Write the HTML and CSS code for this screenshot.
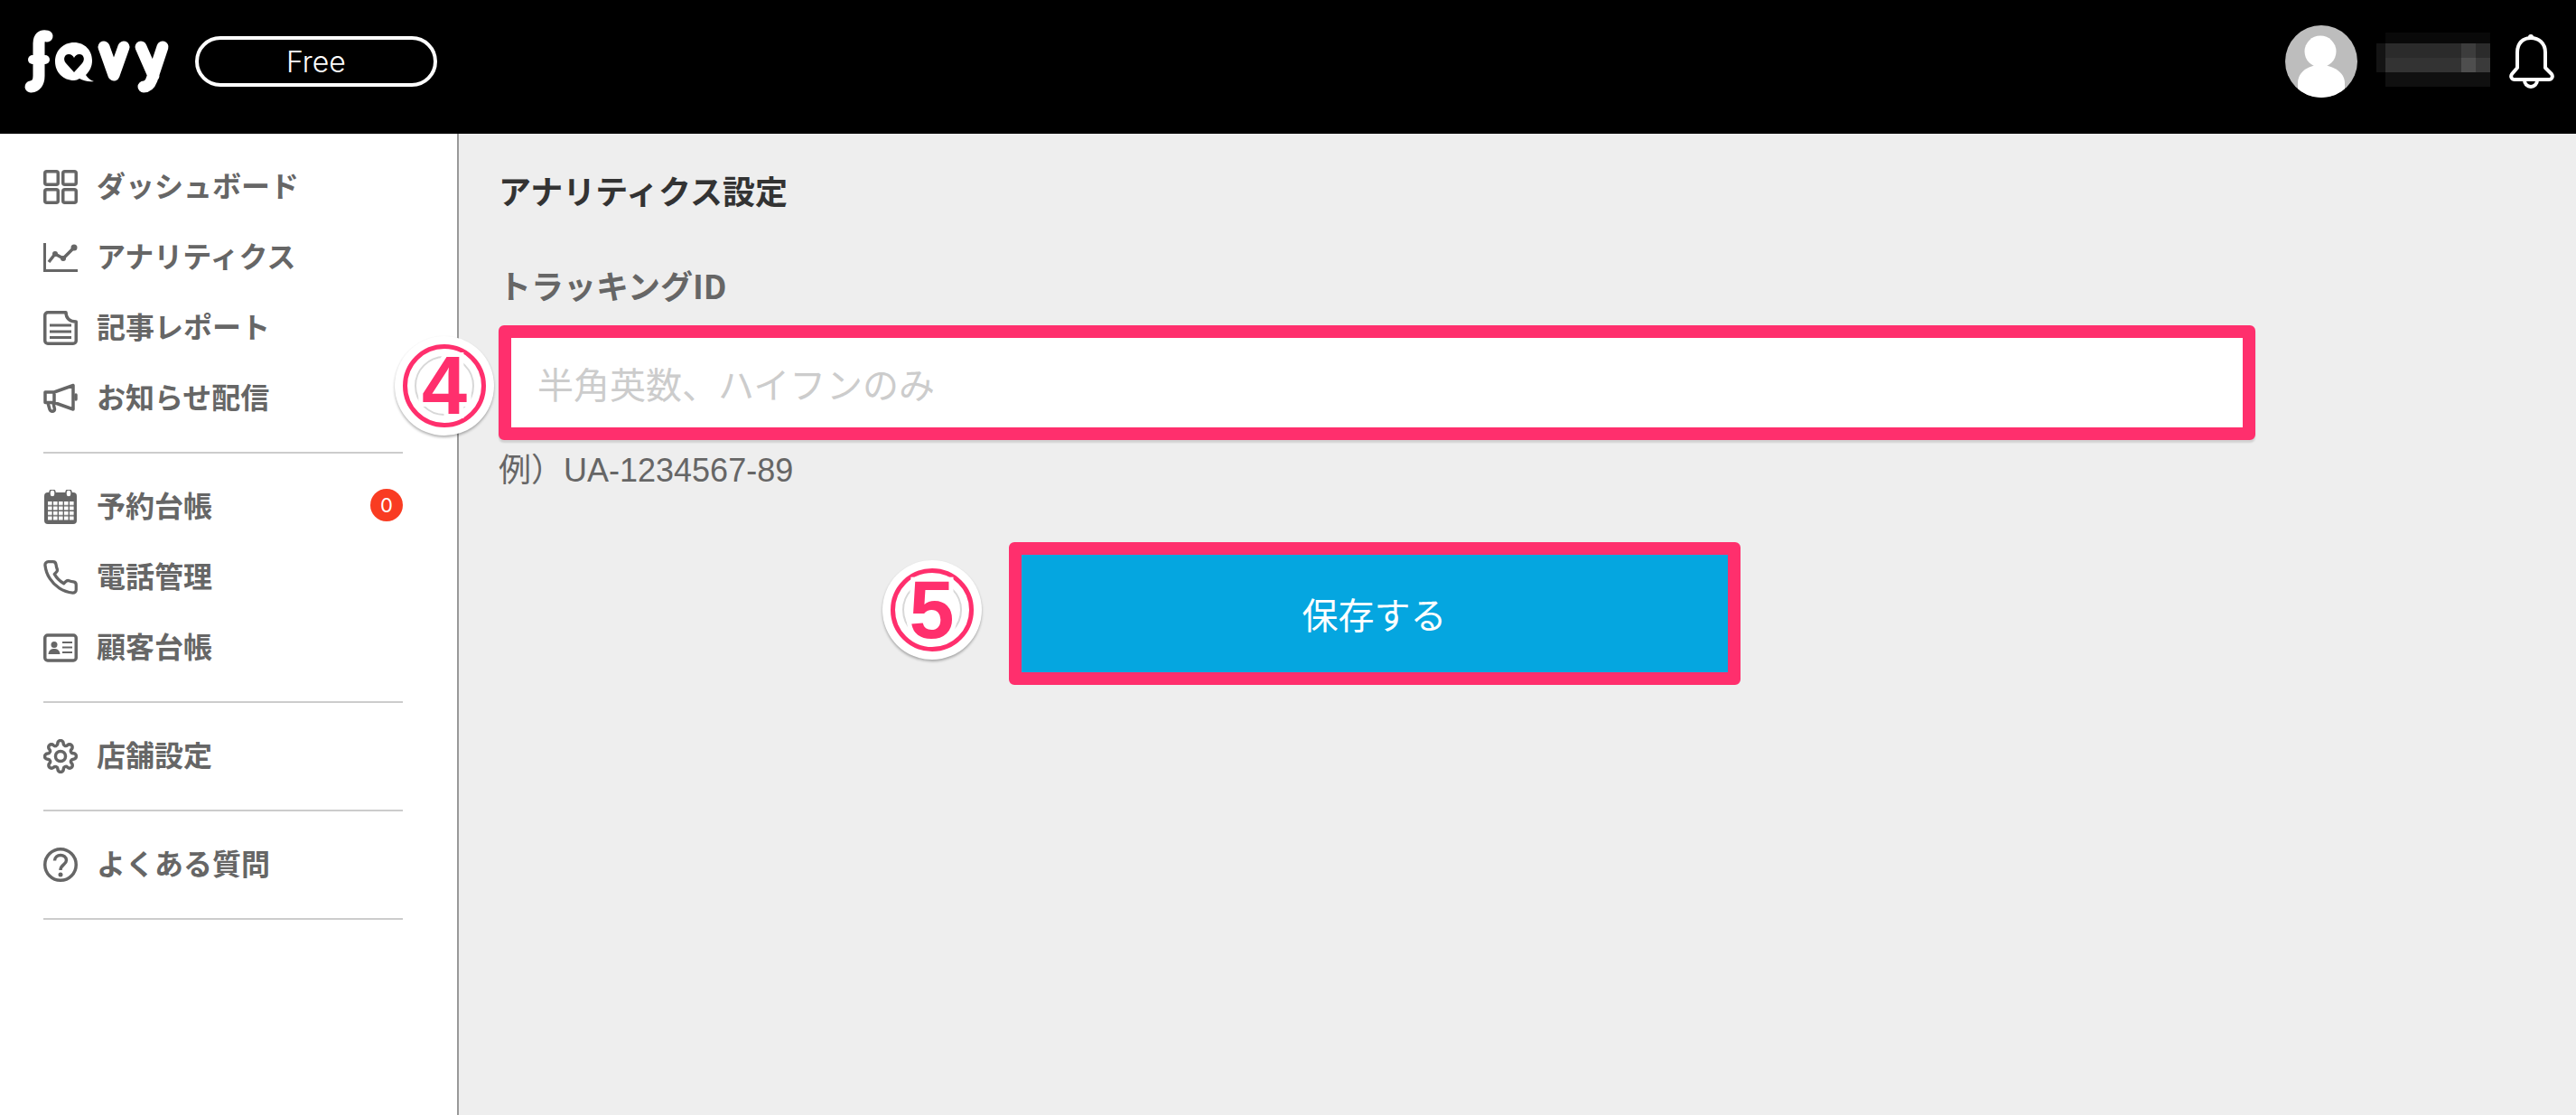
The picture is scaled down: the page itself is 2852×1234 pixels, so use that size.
FILE: index.html
```html
<!DOCTYPE html>
<html lang="ja">
<head>
<meta charset="utf-8">
<title>favy アナリティクス設定</title>
<link rel="stylesheet" href="styles.css">
</head>
<body>
<header class="topbar">
  <div class="brand">
    <svg class="logo" viewBox="24 29 170 78" aria-label="favy">
      <g fill="none" stroke="#fff" stroke-linecap="round" stroke-linejoin="round">
        <path stroke-width="13" d="M52 40 Q43 38 43 48 V84 Q43 95 34 96"/>
        <path stroke-width="10" d="M36 66 H50"/>
        <path stroke-width="13" d="M115 52 L126 83 L137 52"/>
        <path stroke-width="13" d="M156 52 L170 84 M180 52 L168 88 Q165 96 159 96"/>
      </g>
      <path fill="#fff" d="M82 47 C94 47 102 56 102 67 C102 74 99 79 95 83 C97 86 100 89 104 90 C98 91 92 89 88 87 C86 88 84 89 82 89 C70 89 61 80 61 68 C61 56 70 47 82 47 Z"/>
      <path fill="#000" d="M82 80 L73 70 C69 65 72 60 76 60 C79 60 81 62 82 64 C83 62 85 60 88 60 C92 60 95 65 91 70 Z"/>
    </svg>
    <span class="plan">Free</span>
  </div>
  <div class="account">
    <svg class="avatar" viewBox="0 0 80 80" aria-hidden="true">
      <defs><clipPath id="avatarClip"><circle cx="40" cy="40" r="40"/></clipPath></defs>
      <circle cx="40" cy="40" r="40" fill="#bdbdbd"/>
      <g clip-path="url(#avatarClip)" fill="#fff">
        <circle cx="39" cy="29" r="17.500"/>
        <path d="M14 80 V64 C14 52 25 44 39 44 C53 44 66 52 66 64 V80 Z"/>
      </g>
    </svg>
    <svg class="mosaic" viewBox="0 0 126 64" aria-hidden="true">
      <rect x="10" y="0" width="116" height="12" fill="#090909"/>
      <rect x="0" y="12" width="10" height="32" fill="#141414"/>
      <rect x="10" y="12" width="116" height="16" fill="#2b2b2b"/>
      <rect x="94" y="12" width="16" height="16" fill="#3c3c3c"/>
      <rect x="10" y="28" width="116" height="16" fill="#333"/>
      <rect x="94" y="28" width="16" height="16" fill="#4e4e4e"/>
      <rect x="110" y="28" width="16" height="16" fill="#3a3a3a"/>
      <rect x="10" y="44" width="116" height="16" fill="#101010"/>
    </svg>
    <svg class="bell" viewBox="0 0 50 60" aria-hidden="true">
      <circle cx="24" cy="3" r="3" fill="#fff"/>
      <path fill="none" stroke="#fff" stroke-width="4" stroke-linejoin="round" d="M9 37 V20 C9 10 15 4 24 4 C33 4 40 10 40 20 V37 L47 44 C49 47 47 50 44 50 H6 C3 50 1 47 3 44 Z"/>
      <path fill="none" stroke="#fff" stroke-width="4" d="M17 51 a7 7 0 0 0 14 0"/>
    </svg>
  </div>
</header>

<div class="layout">
  <nav class="sidebar">
    <ul class="nav-group">
      <li class="nav-item">
        <svg class="nav-icon" viewBox="0 0 38 38"><g fill="none" stroke="currentColor" stroke-width="3.500"><rect x="1.750" y="1.750" width="14.500" height="14.500" rx="2"/><rect x="21.750" y="1.750" width="14.500" height="14.500" rx="2"/><rect x="1.750" y="21.750" width="14.500" height="14.500" rx="2"/><rect x="21.750" y="21.750" width="14.500" height="14.500" rx="2"/></g></svg>
        <span>ダッシュボード</span>
      </li>
      <li class="nav-item">
        <svg class="nav-icon" viewBox="0 0 38 38"><path fill="none" stroke="currentColor" stroke-width="3" d="M1.500 3 V33.500 H38"/><path fill="none" stroke="currentColor" stroke-width="3.500" stroke-linejoin="round" d="M6 24 L13 15 L22 20 L34 8"/><circle cx="13" cy="15" r="3" fill="currentColor"/><circle cx="22" cy="20" r="3" fill="currentColor"/><circle cx="34" cy="8" r="3.500" fill="currentColor"/></svg>
        <span>アナリティクス</span>
      </li>
      <li class="nav-item">
        <svg class="nav-icon" viewBox="0 0 38 38"><path fill="none" stroke="currentColor" stroke-width="3.500" stroke-linejoin="round" d="M5 1.750 H25 C25 8 29 12 36.250 12 V33 A3.250 3.250 0 0 1 33 36.250 H5 A3.250 3.250 0 0 1 1.750 33 V5 A3.250 3.250 0 0 1 5 1.750 Z"/><path fill="none" stroke="currentColor" stroke-width="3" d="M7 16 H31 M7 23 H31 M7 29.500 H31"/></svg>
        <span>記事レポート</span>
      </li>
      <li class="nav-item">
        <svg class="nav-icon" viewBox="0 0 38 38"><path fill="none" stroke="currentColor" stroke-width="3.500" stroke-linejoin="round" d="M2 12 H12 L33 4.500 V31 L12 23.500 H2 Z M12 12 V23.500 M5 24 L7 31 C8 34 12 34 12.500 31 L11 24"/><path fill="none" stroke="currentColor" stroke-width="3.500" stroke-linecap="round" d="M36 15 V20"/></svg>
        <span>お知らせ配信</span>
      </li>
    </ul>
    <ul class="nav-group">
      <li class="nav-item">
        <svg class="nav-icon" viewBox="0 0 38 38"><defs><pattern id="calCells" x="5" y="13" width="6" height="5.500" patternUnits="userSpaceOnUse"><rect width="4.600" height="4" fill="#fff"/></pattern></defs><rect x="1" y="3" width="36" height="35" rx="4" fill="currentColor"/><rect x="7" y="0" width="6" height="8" rx="3" fill="#fff" stroke="currentColor" stroke-width="1.500"/><rect x="25" y="0" width="6" height="8" rx="3" fill="#fff" stroke="currentColor" stroke-width="1.500"/><rect x="5" y="13" width="29" height="21" fill="url(#calCells)"/></svg>
        <span>予約台帳</span>
        <b class="count">0</b>
      </li>
      <li class="nav-item">
        <svg class="nav-icon" viewBox="1 1 22 22"><path fill="none" stroke="currentColor" stroke-width="1.900" stroke-linejoin="round" d="M22 16.920v3a2 2 0 0 1-2.180 2 19.790 19.790 0 0 1-8.630-3.070 19.500 19.500 0 0 1-6-6 19.790 19.790 0 0 1-3.070-8.670A2 2 0 0 1 4.110 2h3a2 2 0 0 1 2 1.720 12.840 12.840 0 0 0 .7 2.810 2 2 0 0 1-.45 2.110L8.090 9.910a16 16 0 0 0 6 6l1.270-1.270a2 2 0 0 1 2.110-.45 12.840 12.840 0 0 0 2.810.7A2 2 0 0 1 22 16.920z"/></svg>
        <span>電話管理</span>
      </li>
      <li class="nav-item">
        <svg class="nav-icon" viewBox="0 0 38 38"><rect x="1.750" y="5" width="34.500" height="28" rx="3" fill="none" stroke="currentColor" stroke-width="3.500"/><circle cx="12" cy="15.500" r="3.500" fill="currentColor"/><path fill="currentColor" d="M5.500 26 C6 21 9 20 12 20 C15 20 18 21 18.500 26 Z"/><path fill="none" stroke="currentColor" stroke-width="2.200" d="M21 13 H32 M21 18.500 H32 M21 24 H32"/></svg>
        <span>顧客台帳</span>
      </li>
    </ul>
    <ul class="nav-group">
      <li class="nav-item">
        <svg class="nav-icon" viewBox="0 0 24 24"><g fill="none" stroke="currentColor" stroke-width="2.200"><circle cx="12" cy="12" r="3.500"/><path d="M19.400 15a1.650 1.650 0 0 0 .33 1.820l.06.06a2 2 0 0 1 0 2.830 2 2 0 0 1-2.830 0l-.06-.06a1.650 1.650 0 0 0-1.820-.33 1.650 1.650 0 0 0-1 1.510V21a2 2 0 0 1-2 2 2 2 0 0 1-2-2v-.09A1.650 1.650 0 0 0 9 19.400a1.650 1.650 0 0 0-1.820.33l-.06.06a2 2 0 0 1-2.830 0 2 2 0 0 1 0-2.830l.06-.06a1.650 1.650 0 0 0 .33-1.820 1.650 1.650 0 0 0-1.510-1H3a2 2 0 0 1-2-2 2 2 0 0 1 2-2h.09A1.650 1.650 0 0 0 4.600 9a1.650 1.650 0 0 0-.33-1.820l-.06-.06a2 2 0 0 1 0-2.830 2 2 0 0 1 2.830 0l.06.06a1.650 1.650 0 0 0 1.820.33H9a1.650 1.650 0 0 0 1-1.510V3a2 2 0 0 1 2-2 2 2 0 0 1 2 2v.09a1.650 1.650 0 0 0 1 1.510 1.650 1.650 0 0 0 1.820-.33l.06-.06a2 2 0 0 1 2.830 0 2 2 0 0 1 0 2.830l-.06.06a1.650 1.650 0 0 0-.33 1.820V9a1.650 1.650 0 0 0 1.510 1H21a2 2 0 0 1 2 2 2 2 0 0 1-2 2h-.09a1.650 1.650 0 0 0-1.510 1z"/></g></svg>
        <span>店舗設定</span>
      </li>
    </ul>
    <ul class="nav-group">
      <li class="nav-item">
        <svg class="nav-icon" viewBox="0 0 38 38"><circle cx="19" cy="19" r="17.250" fill="none" stroke="currentColor" stroke-width="3.500"/><path fill="none" stroke="currentColor" stroke-width="3.500" d="M12.500 14.500 C12.500 6.500 25.500 6.500 25.500 14 C25.500 19 19 19 19 25"/><circle cx="19" cy="30" r="2.500" fill="currentColor"/></svg>
        <span>よくある質問</span>
      </li>
    </ul>
  </nav>

  <main class="content">
    <h1 class="page-title">アナリティクス設定</h1>
    <label class="field-label" for="trackingId">トラッキングID</label>
    <div class="field">
      <div class="marker marker-input"><span class="marker-ring"></span><span class="marker-digit">4</span></div>
      <input class="text-input" id="trackingId" type="text" placeholder="半角英数、ハイフンのみ">
    </div>
    <p class="hint">例）UA-1234567-89</p>
    <div class="actions">
      <div class="save-wrap">
        <div class="marker marker-button"><span class="marker-ring"></span><span class="marker-digit">5</span></div>
        <button class="save" type="button">保存する</button>
      </div>
    </div>
  </main>
</div>
</body>
</html>
```
FILE: styles.css
```css
* { box-sizing: border-box; }

html, body { height: 100%; }

body {
  margin: 0;
  display: flex;
  flex-direction: column;
  overflow: hidden;
  background: #eee;
  color: #666;
  font-family: "Noto Sans CJK JP", "Noto Sans", sans-serif;
}

/* Top bar */
.topbar {
  flex: none;
  height: 148px;
  padding: 0 24px 12px;
  display: flex;
  align-items: center;
  justify-content: space-between;
  background: #000;
}

.brand, .account { display: flex; align-items: center; }
.brand { gap: 22px; }
.account { gap: 21px; }

.logo { display: block; width: 170px; height: 78px; }

.plan {
  width: 268px;
  height: 56px;
  display: flex;
  align-items: center;
  justify-content: center;
  border: 4px solid #fff;
  border-radius: 28px;
  color: #fff;
  font-family: Inter, "Liberation Sans", sans-serif;
  font-size: 32px;
  font-weight: 300;
}

.avatar { display: block; width: 80px; height: 80px; }
.mosaic { display: block; width: 126px; height: 64px; }
.bell { display: block; width: 50px; height: 60px; }

/* Layout */
.layout { flex: 1; display: flex; min-height: 0; }

/* Sidebar */
.sidebar {
  flex: none;
  width: 508px;
  padding: 0 60px 0 48px;
  background: #fff;
  border-right: 2px solid #999;
}

.nav-group {
  list-style: none;
  margin: 0;
  padding: 18px 0 22px;
  border-bottom: 2px solid #ccc;
}

.nav-item {
  height: 78px;
  display: flex;
  align-items: center;
  gap: 21px;
  font-size: 32px;
  font-weight: 700;
  line-height: 1;
}

.nav-item span { margin-bottom: 2px; }

.nav-icon { flex: none; display: block; width: 38px; height: 38px; margin-top: 4px; }

.count {
  margin-left: auto;
  width: 36px;
  height: 36px;
  display: flex;
  align-items: center;
  justify-content: center;
  border-radius: 50%;
  background: #f93c22;
  color: #fff;
  font-family: Inter, "Liberation Sans", sans-serif;
  font-size: 22px;
  font-weight: 400;
}

/* Main */
.content {
  flex: 1;
  min-width: 0;
  padding: 40px 355px 0 44px;
}

.page-title {
  margin: 0 0 61px;
  color: #333;
  font-size: 36px;
  font-weight: 700;
  line-height: 44px;
}

.field-label {
  display: block;
  margin-bottom: 23px;
  font-size: 36px;
  font-weight: 700;
  line-height: 44px;
}

.field { position: relative; }

.text-input {
  display: block;
  width: 100%;
  height: 127px;
  padding: 0 29px;
  border: 14px solid #ff2f6d;
  border-radius: 6px;
  background: #fff;
  box-shadow: 0 3px 2px rgba(0, 0, 0, .12);
  color: #333;
  font: inherit;
  font-size: 40px;
  outline: none;
}

.text-input::placeholder { color: #ccc; opacity: 1; }

.hint {
  margin: 14px 0 0;
  font-family: "Liberation Sans", "Noto Sans CJK JP", sans-serif;
  font-size: 36px;
  line-height: 40px;
}

.actions { margin-top: 59px; padding-right: 6px; display: flex; justify-content: center; }

.save-wrap { position: relative; }

.save {
  display: block;
  width: 810px;
  height: 158px;
  border: 14px solid #ff2f6d;
  border-radius: 6px;
  background: #05a6e0;
  color: #fff;
  font: inherit;
  font-size: 40px;
}

/* Numbered callouts that sit over the form */
.marker {
  position: absolute;
  width: 110px;
  height: 110px;
  display: flex;
  align-items: center;
  justify-content: center;
  border-radius: 50%;
  background: #fff;
  box-shadow: 0 2px 3px rgba(0, 0, 0, .3);
}

.marker-input { left: -115px; top: 12px; }
.marker-button { left: -140px; top: 20px; }

.marker::before {
  content: "";
  position: absolute;
  inset: 9px;
  border: 5px solid #ff2f6d;
  border-radius: 50%;
}

.marker-ring {
  position: absolute;
  inset: 22px;
  border: 2px solid #d8d8d8;
  border-radius: 50%;
}

.marker-digit {
  position: relative;
  color: #ff2f6d;
  font-family: "Liberation Sans", sans-serif;
  font-size: 90px;
  font-weight: 700;
  line-height: 1;
  -webkit-text-stroke: 10px #fff;
  paint-order: stroke fill;
}
```
